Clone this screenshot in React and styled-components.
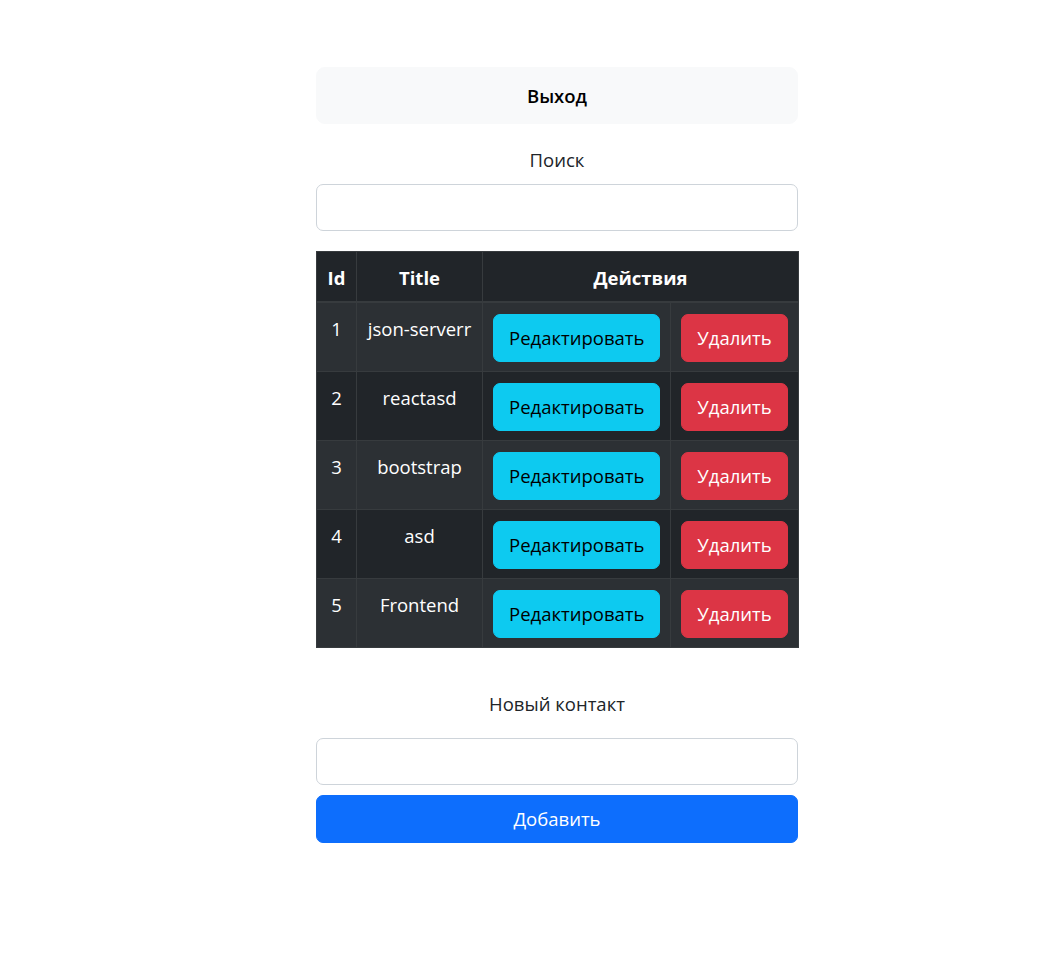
import React from "react";
import styled, { createGlobalStyle } from "styled-components";

const Global = createGlobalStyle`
  html, body { margin: 0; padding: 0; background: #fff; }
  body {
    font-family: "Open Sans", "Noto Sans", "Liberation Sans", sans-serif;
    font-size: 18.5px;
    line-height: 1.5;
    color: #212529;
  }
  * { box-sizing: border-box; }
`;

const Page = styled.div`
  padding: 67px 0 80px 316px;
`;

const Column = styled.div`
  width: 482px;
  display: flex;
  flex-direction: column;
`;

const Button = styled.button`
  font-family: inherit;
  font-size: 18.5px;
  line-height: 30px;
  font-weight: ${(p) => (p.$bold ? 600 : 400)};
  border: 1px solid ${(p) => p.$bg};
  background: ${(p) => p.$bg};
  color: ${(p) => p.$fg};
  border-radius: ${(p) => p.$radius || 7}px;
  padding: ${(p) => p.$pad || "8px 15px"};
  width: ${(p) => (p.$block ? "100%" : "auto")};
  cursor: pointer;
  white-space: nowrap;
  display: inline-block;
`;

const Label = styled.div`
  text-align: center;
  font-size: 18.5px;
  line-height: 30px;
  color: #212529;
  margin-top: ${(p) => p.$mt}px;
  margin-bottom: ${(p) => p.$mb}px;
`;

const Input = styled.input`
  display: block;
  width: 100%;
  height: 47px;
  border: 1px solid #ced4da;
  border-radius: 7px;
  padding: 7px 15px;
  font-family: inherit;
  font-size: 18.5px;
  color: #212529;
  background: #fff;
  margin-bottom: ${(p) => p.$mb || 0}px;
`;

const Table = styled.table`
  width: 482px;
  border-collapse: collapse;
  background: #212529;
  color: #fff;
  margin-top: 20px;
  table-layout: fixed;
  border: 1px solid #373b3e;
`;

const Th = styled.th`
  border: 1px solid #373b3e;
  border-width: 1px 1px 2px 1px;
  padding: 11px 8px 8px;
  font-size: 18.5px;
  line-height: 30px;
  font-weight: 700;
  text-align: center;
  vertical-align: top;
`;

const Row = styled.tr`
  background: ${(p) => (p.$odd ? "#2c3034" : "#212529")};
`;

const Td = styled.td`
  border: 1px solid #373b3e;
  padding: 11px 10px 9px;
  font-size: 18.5px;
  line-height: 30px;
  text-align: center;
  vertical-align: top;
  white-space: nowrap;
  overflow: hidden;
  height: 69px;
`;

const rows = [
  { id: 1, title: "json-serverr" },
  { id: 2, title: "reactasd" },
  { id: 3, title: "bootstrap" },
  { id: 4, title: "asd" },
  { id: 5, title: "Frontend" },
];

export default function App() {
  return (
    <>
      <Global />
      <Page>
        <Column>
          <Button $bg="#f8f9fa" $fg="#000" $block $bold $pad="12.5px 15px" $radius={9}>
            Выход
          </Button>
          <Label $mt={21} $mb={9}>Поиск</Label>
          <Input type="text" />
          <Table>
            <colgroup>
              <col style={{ width: 40 }} />
              <col style={{ width: 126 }} />
              <col style={{ width: 188 }} />
              <col style={{ width: 128 }} />
            </colgroup>
            <thead>
              <tr>
                <Th>Id</Th>
                <Th>Title</Th>
                <Th colSpan={2}>Действия</Th>
              </tr>
            </thead>
            <tbody>
              {rows.map((r, i) => (
                <Row key={r.id} $odd={i % 2 === 0}>
                  <Td>{r.id}</Td>
                  <Td>{r.title}</Td>
                  <Td>
                    <Button $bg="#0dcaf0" $fg="#000">Редактировать</Button>
                  </Td>
                  <Td>
                    <Button $bg="#dc3545" $fg="#fff">Удалить</Button>
                  </Td>
                </Row>
              ))}
            </tbody>
          </Table>
          <Label $mt={41} $mb={19}>Новый контакт</Label>
          <Input type="text" $mb={10} />
          <Button $bg="#0d6efd" $fg="#fff" $block>Добавить</Button>
        </Column>
      </Page>
    </>
  );
}
